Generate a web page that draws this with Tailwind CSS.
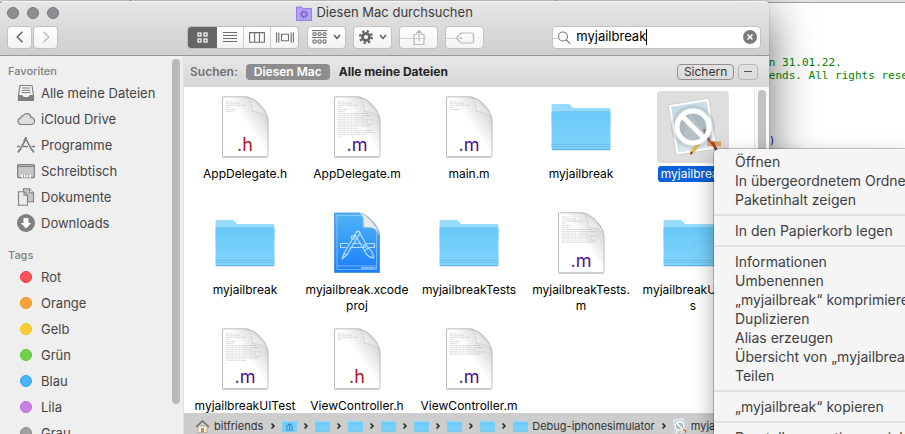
<!DOCTYPE html>
<html lang="de">
<head>
<meta charset="utf-8">
<meta name="viewport" content="width=device-width, initial-scale=1">
<title>Diesen Mac durchsuchen</title>
<script src="https://cdn.jsdelivr.net/npm/@tailwindcss/browser@4"></script>
</head>
<body class="relative h-screen overflow-hidden bg-white font-[Inter,Roboto,sans-serif] text-[13px] text-black">

<svg class="absolute size-0" aria-hidden="true">
  <defs>
    <linearGradient id="gFolder" x1="0" y1="0" x2="0" y2="1"><stop offset="0" stop-color="#69c9f8"/><stop offset="1" stop-color="#80d4fc"/></linearGradient>
    <linearGradient id="gCurl" x1="0.1" y1="0.9" x2="0.7" y2="0.3"><stop offset="0" stop-color="#fff"/><stop offset=".75" stop-color="#e8e8e8"/><stop offset="1" stop-color="#d0d0d0"/></linearGradient>
    <linearGradient id="gPage" x1="0.2" y1="0.7" x2="0.85" y2="0.1"><stop offset=".45" stop-color="#fff"/><stop offset="1" stop-color="#d2d2d2"/></linearGradient>
    <linearGradient id="gProj" x1="0" y1="0" x2="0" y2="1"><stop offset="0" stop-color="#52b5f4"/><stop offset="1" stop-color="#1a7dfa"/></linearGradient>
    <symbol id="folder" viewBox="0 0 60 48">
      <path d="M.5 2.500Q.5 1 2 1H17q1.500 0 2.500 1.200L22 5h36q1.500 0 1.500 1.500V20H.5z" fill="#97dcfd"/>
      <path d="M.5 10Q.5 8.500 2 8.500h56q1.500 0 1.500 1.500V45.500q0 1.500-1.500 1.500H2Q.5 47 .5 45.500z" fill="url(#gFolder)"/>
      <path d="M.5 41.500h59M.5 43.500h59" stroke="#5fb9e6" stroke-width=".6"/>
      <path d="M1 46.700h58" stroke="#55a9d8" stroke-width="1"/>
      <path d="M2 8.500h56" stroke="#6dc3ee" stroke-width=".7"/>
    </symbol>
    <symbol id="page" viewBox="0 0 48 62">
      <path d="M1 61.500h46" stroke="#000" stroke-opacity=".15"/>
      <path d="M1.500 2Q1.500 .8 2.700 .8H24C34 .8 47 14 47 25V59.500q0 1.200-1.200 1.200H2.700q-1.200 0-1.200-1.200z" fill="url(#gPage)" stroke="#b4b4b4" stroke-width=".9"/>
      <path d="M24 .9C30 2 31 7 31.500 15.500C40 16 44.500 17.500 47 25C46 14 34 2 24 .9z" fill="url(#gCurl)" stroke="#bdbdbd" stroke-width=".5"/>
    </symbol>
    <symbol id="tools" viewBox="0 0 36 32">
      <g fill="none" stroke="currentColor" stroke-width="1.200" stroke-linejoin="round" stroke-linecap="round">
        <path d="M8.500 14.500H1v4h5.500M13.500 14.500h8M15 18.500h-3.500h11.500M27 14.500h8v4h-6"/>
        <path d="M17 3L4.500 24.500 2.500 30l4.500-3.700L20.500 4.500Q20 1 17 3z"/>
        <path d="M4.500 24.500l2.500 1.800"/>
        <path d="M16.500 4Q18 .5 20 3.500L28.500 19q5 3 5.500 10-6-1-8-5.500L15.500 5.500M25 21.500l4-2.500"/>
        <circle cx="13.500" cy="8.500" r="1.800"/><circle cx="25" cy="17" r="1.300"/>
      </g>
    </symbol>
    <symbol id="appicon" viewBox="0 0 72 72">
      <g transform="rotate(-9 34 36)">
        <rect x="15" y="10.500" width="41" height="51" fill="#fff" stroke="#c9c9c9" stroke-width=".8"/>
        <rect x="17.500" y="13" width="36" height="46" fill="#c9dde6"/>
        <path d="M17.500 59L35 22l18.500 37z" fill="#dce8ee"/>
      </g>
      <path d="M51 50l13 .5v5l-14-.5z" fill="#d3a465"/>
      <path d="M33 64l1-5 13-17 3 2-13 18z" fill="#e7bd55"/><path d="M33 64l1-4 2 2z" fill="#584638"/>
      <path d="M46 39q2-3 4 1l4 10-3 1z" fill="#9c5549"/><path d="M52 50l5 1 4 8-2 1z" fill="#b3402e"/><path d="M56 56l5 3-1 2z" fill="#2e2a2a"/>
      <circle cx="36" cy="36" r="22" fill="#8a969c" fill-opacity=".25"/>
      <circle cx="36" cy="36" r="16" fill="#8a969c" fill-opacity=".3" stroke="#fff" stroke-width="5"/>
      <path d="M25 25l22 22" stroke="#fff" stroke-width="5"/>
    </symbol>
    <symbol id="chev" viewBox="0 0 8 8"><path d="M1 2l3 3.500L7 2" fill="none" stroke="#555" stroke-width="1.400"/></symbol>
    <symbol id="sep" viewBox="0 0 6 8"><path d="M1.500 1.500L4 4 1.500 6.500" fill="none" stroke="#222" stroke-width="1.500"/></symbol>
  </defs>
</svg>

<!-- editor window in the background -->
<section class="absolute inset-0 overflow-hidden" aria-label="Editor">
  <div class="flex h-[3px] border-b border-[#a0a0a0] bg-[#e3e3e3]">
    <div class="w-[131px] border-r border-[#888]"></div>
    <div class="w-[425px] border-r border-[#888]"></div>
  </div>
  <pre class="overflow-hidden pt-[53px] pl-[590px] font-['DejaVu_Sans_Mono',monospace] text-[11px] leading-[13px] text-[#008400]">//  Created by bitfriends on 31.01.22.
//  Copyright © 2022 bitfriends. All rights reserved.
//

#import "AppDelegate.h"

<span class="text-[#10108a]">int main(int, char * argv[])</span></pre>
</section>

<!-- finder window -->
<main class="absolute top-px bottom-0 left-0 flex w-[85%] flex-col rounded-t-[5px] bg-white shadow-[0_12px_45px_rgba(0,0,0,0.6),0_0_1px_rgba(0,0,0,0.5)]">
  <header class="flex h-[55px] shrink-0 flex-col rounded-t-[5px] border-t border-b border-t-[#f6f6f6] border-b-[#989898] bg-linear-to-b from-[#e6e6e6] to-[#cfcfcf]">
    <div class="grid h-[22px] grid-cols-[1fr_auto_1fr] items-center">
      <div class="flex gap-2 pl-[7px]">
        <button aria-label="Schließen" class="size-3 rounded-full border border-[#77777b] bg-[#8e8e93]"></button>
        <button aria-label="Minimieren" class="size-3 rounded-full border border-[#77777b] bg-[#8e8e93]"></button>
        <button aria-label="Zoomen" class="size-3 rounded-full border border-[#77777b] bg-[#8e8e93]"></button>
      </div>
      <h1 class="flex items-center gap-1 text-[13px] text-[#3c3c3c]">
        <svg class="h-[15px] w-4" viewBox="0 0 16 15"><path d="M.5 1h5l1.500 1.500h8.500v12H.5z" fill="#b5a2f5" stroke="#957fe0"/><circle cx="8" cy="8.300" r="2.400" fill="none" stroke="#7a63cf" stroke-width="1.200"/><circle cx="8" cy="8.300" r="3.600" fill="none" stroke="#7a63cf" stroke-width="1.200" stroke-dasharray="1.400 1.427"/></svg>
        Diesen Mac durchsuchen
      </h1>
    </div>
    <div class="flex h-[26px] items-center pr-2 pl-[7px]">
      <div class="flex gap-px">
        <button aria-label="Zurück" class="flex h-[23px] w-[25px] items-center justify-center rounded-[4px] border border-[#c2c2c2] bg-linear-to-b from-white to-[#f3f3f3]"><svg class="h-3 w-2" viewBox="0 0 8 12"><path d="M6.500 .8L1.200 6l5.300 5.200" fill="none" stroke="#666" stroke-width="1.500"/></svg></button>
        <button aria-label="Vorwärts" class="flex h-[23px] w-[25px] items-center justify-center rounded-[4px] border border-[#c2c2c2] bg-linear-to-b from-white to-[#f3f3f3]"><svg class="h-3 w-2" viewBox="0 0 8 12"><path d="M1.500 .8L6.800 6l-5.300 5.200" fill="none" stroke="#bdbdbd" stroke-width="1.500"/></svg></button>
      </div>
      <div class="ml-[129px] flex h-[23px] w-[112px] overflow-hidden rounded-[4px] border border-[#bdbdbd] bg-linear-to-b from-white to-[#f3f3f3]">
        <button aria-label="Symbole" class="flex w-[29px] items-center justify-center bg-[#666]"><svg class="size-[11px]" viewBox="0 0 11 11" fill="none" stroke="#fff" stroke-width="1.200"><rect x="1" y="1" width="3" height="3"/><rect x="7" y="1" width="3" height="3"/><rect x="1" y="7" width="3" height="3"/><rect x="7" y="7" width="3" height="3"/></svg></button>
        <button aria-label="Liste" class="flex w-[27px] items-center justify-center border-r border-[#cfcfcf]"><svg class="h-3 w-[14px]" viewBox="0 0 14 12"><path d="M0 1.500h14M0 4.500h14M0 7.500h14M0 10.500h14" stroke="#6d6d6d" stroke-width="1.100"/></svg></button>
        <button aria-label="Spalten" class="flex w-[27px] items-center justify-center border-r border-[#cfcfcf]"><svg class="h-[11px] w-4" viewBox="0 0 16 11"><path d="M.6 .6h14.800v9.600H.6zM5.600 .6v9.600M10.400 .6v9.600" fill="none" stroke="#6d6d6d" stroke-width="1.100"/></svg></button>
        <button aria-label="Cover Flow" class="flex w-[27px] items-center justify-center"><svg class="h-[11px] w-[18px]" viewBox="0 0 18 11"><path d="M.6 .5v10M2.800 .5v10M15.200 .5v10M17.400 .5v10M5.500 2.200h7v6.600h-7z" fill="none" stroke="#6d6d6d" stroke-width="1.100"/></svg></button>
      </div>
      <div class="ml-2 flex gap-[7px]">
        <button aria-label="Ausrichten" class="flex h-[23px] w-[39px] items-center justify-center gap-[6px] rounded-[4px] border border-[#c2c2c2] bg-linear-to-b from-white to-[#f3f3f3]"><svg class="h-[14px] w-[15px]" viewBox="0 0 15 14" fill="none" stroke="#666"><path d="M0 .6h15M0 7.500h15"/><path d="M1 2.800h3v2.500H1zM6 2.800h3v2.500H6zM11 2.800h3v2.500h-3zM1 10h3v3H1zM6 10h3v3H6zM11 10h3v3h-3z"/></svg><svg class="size-2"><use href="#chev"/></svg></button>
        <button aria-label="Aktionen" class="flex h-[23px] w-[39px] items-center justify-center gap-[6px] rounded-[4px] border border-[#c2c2c2] bg-linear-to-b from-white to-[#f3f3f3]"><svg class="size-[14px]" viewBox="0 0 14 14" fill="none" stroke="#666"><circle cx="7" cy="7" r="3.500" stroke-width="2.800"/><circle cx="7" cy="7" r="5.900" stroke-width="2.200" stroke-dasharray="2.300 2.330"/></svg><svg class="size-2"><use href="#chev"/></svg></button>
        <button aria-label="Teilen" class="h-[23px] w-[39px] rounded-[4px] border border-[#c2c2c2] bg-linear-to-b from-white to-[#f3f3f3]"><svg class="h-[21px] w-full" viewBox="0 0 37 21" fill="none" stroke="#b9b9b9"><path d="M0 11.500h26" stroke="#d0d0d0"/><path d="M17 7.500h-3v10h10v-10h-3M19 14V3.500M16 6.500l3-3 3 3" stroke-width="1.200"/></svg></button>
        <button aria-label="Tags" class="h-[23px] w-[39px] rounded-[4px] border border-[#c2c2c2] bg-linear-to-b from-white to-[#f3f3f3]"><svg class="h-[21px] w-full" viewBox="0 0 37 21" fill="none" stroke="#b9b9b9"><path d="M0 11.500h14" stroke="#d0d0d0"/><path d="M15 6h11q1.500 0 1.500 1.500v7q0 1.500-1.500 1.500H15l-4-4v-2z" stroke-width="1.200"/><circle cx="15" cy="11" r=".8"/></svg></button>
      </div>
      <label class="ml-auto flex h-[23px] w-[209px] items-center rounded-[4px] border border-[#c2c2c2] bg-white pr-[3px]">
        <svg class="h-[21px] w-5 shrink-0" viewBox="0 0 20 21" fill="none"><path d="M0 11.500h5" stroke="#ccc"/><circle cx="10" cy="9.500" r="4.500" stroke="#777" stroke-width="1.100"/><path d="M13.300 12.800l4 4" stroke="#777" stroke-width="1.200"/></svg>
        <span class="ml-[3px] flex flex-1 items-center"><input aria-label="Suchen" value="myjailbreak" class="field-sizing-content bg-transparent text-[13px] outline-none"><i class="h-4 w-px bg-black"></i></span>
        <svg class="size-[14px]" viewBox="0 0 14 14"><circle cx="7" cy="7" r="7" fill="#7c7c7c"/><path d="M4.500 4.500l5 5M9.500 4.500l-5 5" stroke="#fff" stroke-width="1.600"/></svg>
      </label>
    </div>
  </header>

  <div class="flex min-h-0 flex-1">
    <aside class="relative w-[184px] shrink-0 overflow-hidden border-r border-[#e0e0e0] bg-[#efefef] pt-[5px] text-[#444]">
      <h2 class="pl-2 text-[11px] leading-5 font-medium text-[#808080]">Favoriten</h2>
      <nav class="-mt-px flex flex-col pl-[17px] leading-[26px] [&>a]:flex [&>a]:h-[26px] [&>a]:items-center [&>a]:gap-[6px]">
        <a href="#"><svg class="size-[18px]" viewBox="0 0 18 18"><path d="M3 1.500h12l1.500 10v5h-15v-5z" fill="#f4f4f4" stroke="#808080" stroke-width="1.200"/><path d="M5 4h8M4.600 6.300h8.800M4.300 8.600h9.400" stroke="#808080"/><path d="M1.500 11h3.800l1.500 2h4.400l1.500-2h3.800v5.500h-15z" fill="#808080"/></svg>Alle meine Dateien</a>
        <a href="#"><svg class="size-[18px]" viewBox="0 0 18 18"><path d="M4 14.500a3.200 3.200 0 0 1-.5-6.300A2.600 2.600 0 0 1 6 5.800 4.300 4.300 0 0 1 14 7.300a3.600 3.600 0 0 1 0 7.200z" fill="#dedede" stroke="#808080" stroke-width="1.200"/></svg>iCloud Drive</a>
        <a href="#"><svg class="size-[18px]" viewBox="0 0 18 18" fill="none" stroke="#7c7c7c" stroke-width="1.600"><path d="M9.800 1.500L2.500 14.500M8.200 1.500l6.800 13M0 10.500h3M6 10.500h5M14.500 10.500H18M1 16.500l1.500-2.500M17 16.500L15 13.500"/><path d="M6.500 5l2.500-4" stroke-width="1"/></svg>Programme</a>
        <a href="#"><svg class="size-[18px]" viewBox="0 0 18 18"><rect x=".6" y="2.600" width="16.800" height="13" rx="1" fill="#c6c6c6" stroke="#808080" stroke-width="1.200"/><path d="M1 4.500h16" stroke="#808080"/><path d="M4 13h10v2.500H4z" fill="#fff"/><path d="M6.500 13v2.500M9 13v2.500M11.500 13v2.500" stroke="#999"/></svg>Schreibtisch</a>
        <a href="#"><svg class="size-[18px]" viewBox="0 0 18 18" stroke="#808080" stroke-width="1.100"><path d="M6.500 .8h6l4 4v9h-10z" fill="#c6c6c6"/><path d="M12.500 .8v4h4" fill="#efefef"/><path d="M1.500 3.800h5.500l3.500 3.500v10h-9z" fill="#ececec"/><path d="M7 3.800v3.500h3.500" fill="none"/></svg>Dokumente</a>
        <a href="#"><svg class="size-[18px]" viewBox="0 0 18 18"><circle cx="9" cy="9" r="9" fill="#808080"/><path d="M6.500 4h5v5h2.800L9 14.500 3.700 9h2.800z" fill="#fff"/></svg>Downloads</a>
      </nav>
      <h2 class="mt-[9px] pl-2 text-[11px] leading-5 font-medium text-[#808080]">Tags</h2>
      <nav class="-mt-px flex flex-col pl-5 leading-[26px] [&>a]:flex [&>a]:h-[26px] [&>a]:items-center [&>a]:gap-[9px]">
        <a href="#"><i class="size-3 rounded-full border border-[#f8353d] bg-[#fc5359]"></i>Rot</a>
        <a href="#"><i class="size-3 rounded-full border border-[#f5911a] bg-[#f8a23a]"></i>Orange</a>
        <a href="#"><i class="size-3 rounded-full border border-[#f2c418] bg-[#f6cf38]"></i>Gelb</a>
        <a href="#"><i class="size-3 rounded-full border border-[#5cc735] bg-[#72d04e]"></i>Grün</a>
        <a href="#"><i class="size-3 rounded-full border border-[#2ba3f0] bg-[#4eb3f4]"></i>Blau</a>
        <a href="#"><i class="size-3 rounded-full border border-[#c168db] bg-[#cc7fe1]"></i>Lila</a>
        <a href="#"><i class="size-3 rounded-full border border-[#8c8c8c] bg-[#a0a0a0]"></i>Grau</a>
      </nav>
      <div class="absolute top-[3px] right-[3px] h-[345px] w-2 rounded-full bg-[#b9b9b9]"></div>
    </aside>

    <section class="flex min-w-0 flex-1 flex-col">
      <div class="flex h-[31px] shrink-0 items-center bg-linear-to-b from-[#e8e8e8] to-[#d6d6d6] pr-[11px] pl-[6px] text-xs font-semibold">
        <span class="text-[#707070]">Suchen:</span>
        <button class="ml-2 h-4 rounded-[4px] bg-[#8d8d8d] px-2 leading-4 text-white">Diesen Mac</button>
        <button class="ml-[9px] font-bold text-[#222]">Alle meine Dateien</button>
        <button class="ml-auto h-4 rounded-[4px] border border-[#909090] px-[6px] text-xs leading-[14px] font-normal text-[#333]">Sichern</button>
        <button aria-label="Kriterium entfernen" class="ml-1 flex h-4 w-5 items-center justify-center rounded-[4px] border border-[#b5b5b5]"><i class="h-px w-2 bg-[#555]"></i></button>
      </div>

      <div class="flex min-h-0 flex-1">
        <div id="files" class="grid min-h-0 flex-1 auto-rows-[116px] grid-cols-[repeat(5,112px)] content-start overflow-hidden pt-1 pl-[5px] text-xs leading-4"></div>
        <div class="flex w-[15px] shrink-0 justify-center border-l border-[#e6e6e6] bg-[#fafafa] pt-[3px]"><div class="h-[300px] w-2 rounded-full bg-[#c1c1c1]"></div></div>
      </div>

      <footer class="flex h-[21px] shrink-0 items-center overflow-hidden bg-[#cdcdcd] pt-[5px] pl-3 text-[11px] whitespace-nowrap text-[#333]">
        <svg class="size-[13px] shrink-0" viewBox="0 0 13 13"><path d="M2 6h9v6.500H2z" fill="#f3efe8" stroke="#a08b77" stroke-width=".6"/><path d="M0 7L6.500 1 13 7" fill="none" stroke="#7b6a60" stroke-width="1.500"/><path d="M5 8h3v4.500H5z" fill="#e08a2e"/></svg>
        <span class="ml-[5px]">bitfriends</span>
        <span id="crumbs" class="ml-[7px] flex items-center gap-[6px]"></span>
        <span class="ml-1">Debug-iphonesimulator</span>
        <svg class="ml-[6px] h-2 w-[6px] shrink-0"><use href="#sep"/></svg>
        <svg class="ml-[5px] size-4 shrink-0" viewBox="10 6 56 60"><use href="#appicon" width="72" height="72"/></svg>
        <span class="ml-[3px]">myjailbreak</span>
      </footer>
    </section>
  </div>
</main>

<!-- context menu -->
<div role="menu" class="absolute top-[149px] right-0 bottom-0 left-[714px] overflow-hidden rounded-tl-[5px] bg-[#f5f5f5] pt-[3px] text-sm leading-[19px] whitespace-nowrap text-[#404040] shadow-[0_8px_22px_rgba(0,0,0,0.35),0_0_0_1px_rgba(0,0,0,0.2)] [&>button]:block [&>button]:h-[19px] [&>button]:pl-[21px] [&>hr]:my-[5px] [&>hr]:border-t-2 [&>hr]:border-[#e2e2e2]">
  <button role="menuitem">Öffnen</button>
  <button role="menuitem">In übergeordnetem Ordner anzeigen</button>
  <button role="menuitem">Paketinhalt zeigen</button>
  <hr>
  <button role="menuitem">In den Papierkorb legen</button>
  <hr>
  <button role="menuitem">Informationen</button>
  <button role="menuitem">Umbenennen</button>
  <button role="menuitem">„myjailbreak“ komprimieren</button>
  <button role="menuitem">Duplizieren</button>
  <button role="menuitem">Alias erzeugen</button>
  <button role="menuitem">Übersicht von „myjailbreak“</button>
  <button role="menuitem">Teilen</button>
  <hr>
  <button role="menuitem">„myjailbreak“ kopieren</button>
  <hr>
  <button role="menuitem">Darstellungsoptionen einblenden</button>
</div>

<script>
  // [kind, label lines, number of preview code lines]
  const files = [
    ['h', ['AppDelegate.h'], 6], ['m', ['AppDelegate.m'], 18], ['m', ['main.m'], 5], ['folder', ['myjailbreak']], ['app', ['myjailbreak']],
    ['folder', ['myjailbreak']], ['proj', ['myjailbreak.xcode', 'proj']], ['folder', ['myjailbreakTests']], ['m', ['myjailbreakTests.', 'm'], 13], ['folder', ['myjailbreakUITest', 's']],
    ['m', ['myjailbreakUITest', 's.m'], 14], ['h', ['ViewController.h'], 4], ['m', ['ViewController.m'], 11]
  ];
  const widths = [5, 14, 20, 4, 10, 7, 30, 34, 26, 35, 30, 35, 33, 20, 34, 36, 28, 2];
  function preview(n) {
    let s = '';
    for (let i = 0; i < n; i++) {
      const y = 5 + i * 2.1, w = Math.min(widths[i], y < 16 ? 23 : 36);
      s += `<path d="M5 ${y}h${w}" stroke="#777" stroke-opacity=".4" stroke-width=".7" stroke-dasharray="3 .6 5 .5 2 .7"/>`;
    }
    return s;
  }
  function icon(kind, n) {
    if (kind === 'folder') return '<svg class="h-12 w-[60px]"><use href="#folder"/></svg>';
    if (kind === 'app') return '<svg class="size-[72px]"><use href="#appicon"/></svg>';
    if (kind === 'proj') return `<svg class="h-[62px] w-12" viewBox="0 0 48 62"><path d="M1.500 1H26C35 2 46 14 46.500 24V60.500h-45z" fill="url(#gProj)" stroke="#3c8fdb" stroke-width=".8"/>
      <path d="M4 3.500h26v12h13.500v42H4zM4 54h39.500" fill="none" stroke="#b5dcff" stroke-opacity=".8" stroke-width=".7"/><path d="M28 55h14.500v2H28z" fill="#b5dcff" fill-opacity=".6"/>
      <path d="M26 1C31 3 30.500 8 31 15c7-.5 13 1 15.500 9C45 14 35 2 26 1z" fill="url(#gCurl)" stroke="#9bb" stroke-width=".4"/>
      <use href="#tools" x="6" y="17" width="37" height="32" color="#b5dcff"/></svg>`;
    const color = kind === 'h' ? 'fill-[#b5122b]' : 'fill-[#4b1091]';
    return `<svg class="h-[62px] w-12" viewBox="0 0 48 62"><use href="#page"/>${preview(n)}<text x="24" y="55" text-anchor="middle" class="${color} font-[Inter,sans-serif] text-lg">.${kind}</text></svg>`;
  }
  document.getElementById('files').innerHTML = files.map(([k, lines, n]) => {
    const sel = k === 'app';
    return `<button class="flex flex-col items-center"><span class="flex size-[72px] shrink-0 items-center justify-center rounded-[4px] ${sel ? 'bg-[#dedede]' : ''}">${icon(k, n)}</span><span class="mt-[3px] shrink-0 rounded-[3px] px-[3px] whitespace-nowrap ${sel ? 'bg-[#0a61d8] text-white' : ''}">${lines.join('<br>')}</span></button>`;
  }).join('');
  const sep = '<svg class="h-2 w-[6px] shrink-0"><use href="#sep"/></svg>';
  let c = '';
  for (let i = 0; i < 8; i++) {
    c += sep + (i === 0
      ? '<svg class="h-3 w-[15px] shrink-0" viewBox="0 0 60 48"><use href="#folder"/><path d="M16 22l14-9 14 9zM18 24h4v14h-4zM28 24h4v14h-4zM38 24h4v14h-4zM15 39h30v3H15z" fill="#2f86bd"/></svg>'
      : '<svg class="h-3 w-[15px] shrink-0"><use href="#folder"/></svg>');
  }
  document.getElementById('crumbs').innerHTML = c;
</script>
</body>
</html>
